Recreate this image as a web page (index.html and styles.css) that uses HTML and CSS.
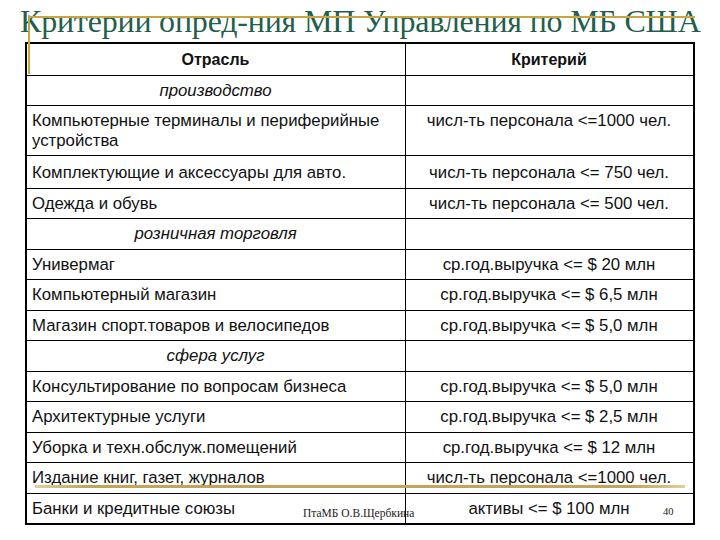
FILE: index.html
```html
<!DOCTYPE html>
<html lang="ru">
<head>
<meta charset="utf-8">
<title>Критерии</title>
<link rel="stylesheet" href="styles.css">
</head>
<body>
<div class="slide">
  <h1 class="title">Критерии опред-ния МП Управления по МБ США</h1>
  <span class="rule-top"></span>
  <span class="rule-left"></span>
  <table class="crit">
    <thead>
      <tr><th class="c-ind">Отрасль</th><th class="c-crit">Критерий</th></tr>
    </thead>
    <tbody>
      <tr class="cat"><td>производство</td><td></td></tr>
      <tr><td>Компьютерные терминалы и периферийные устройства</td><td>числ-ть персонала &lt;=1000 чел.</td></tr>
      <tr class="tall"><td>Комплектующие и аксессуары для авто.</td><td>числ-ть персонала &lt;= 750 чел.</td></tr>
      <tr><td>Одежда и обувь</td><td>числ-ть персонала &lt;= 500 чел.</td></tr>
      <tr class="cat"><td>розничная торговля</td><td></td></tr>
      <tr><td>Универмаг</td><td>ср.год.выручка &lt;= $ 20 млн</td></tr>
      <tr><td>Компьютерный магазин</td><td>ср.год.выручка &lt;= $ 6,5 млн</td></tr>
      <tr><td>Магазин спорт.товаров и велосипедов</td><td>ср.год.выручка &lt;= $ 5,0 млн</td></tr>
      <tr class="cat"><td>сфера услуг</td><td></td></tr>
      <tr><td>Консультирование по вопросам бизнеса</td><td>ср.год.выручка &lt;= $ 5,0 млн</td></tr>
      <tr><td>Архитектурные услуги</td><td>ср.год.выручка &lt;= $ 2,5 млн</td></tr>
      <tr><td>Уборка и техн.обслуж.помещений</td><td>ср.год.выручка &lt;= $ 12 млн</td></tr>
      <tr><td>Издание книг, газет, журналов</td><td>числ-ть персонала &lt;=1000 чел.</td></tr>
      <tr><td>Банки и кредитные союзы</td><td>активы &lt;= $ 100 млн</td></tr>
    </tbody>
  </table>
  <span class="rule-bottom"></span>
  <span class="footer-author">ПтаМБ О.В.Щербкина</span>
  <span class="page-num">40</span>
</div>
</body>
</html>
```
FILE: styles.css
```css
html, body {
  margin: 0;
  padding: 0;
  background: #ffffff;
}

.slide {
  position: relative;
  width: 720px;
  height: 540px;
  overflow: hidden;
  font-family: "Liberation Sans", Arial, sans-serif;
}

.title {
  margin: 0;
  padding-left: 20px;
  height: 42px;
  font-family: "Liberation Serif", "DejaVu Serif", serif;
  font-weight: normal;
  font-size: 32px;
  letter-spacing: -0.2px;
  line-height: 43px;
  color: #1f5f4c;
  white-space: nowrap;
}

.rule-top {
  position: absolute;
  left: 28px;
  top: 16px;
  width: 667px;
  height: 2px;
  background: #c9a440;
}

.rule-left {
  position: absolute;
  left: 28px;
  top: 15px;
  width: 2px;
  height: 59px;
  background: #c9a440;
}

.rule-bottom {
  position: absolute;
  left: 35px;
  top: 485px;
  width: 650px;
  height: 3px;
  background: linear-gradient(to right, #e0cf9c, #c5a458 8%, #c5a458 92%, #e0cf9c);
}

.crit {
  margin-left: 25px;
  width: 670px;
  border-collapse: collapse;
  border: 2px solid #000;
  font-size: 16.8px;
  color: #111;
  table-layout: fixed;
}

.crit th,
.crit td {
  border: 1px solid #000;
  padding: 5px 6px 5px 5px;
  line-height: 19.5px;
  vertical-align: top;
}

.crit th {
  font-weight: bold;
  font-size: 16px;
  text-align: center;
  padding-top: 6px;
}

.c-ind { width: 367px; }

.crit td:nth-child(2) {
  text-align: center;
}

.crit tr.cat td:first-child {
  font-style: italic;
  text-align: center;
}

.crit tr.tall td {
  padding-top: 7px;
}

.footer-author {
  position: absolute;
  left: 303px;
  top: 507px;
  font-family: "Liberation Serif", serif;
  font-size: 11.5px;
  color: #222;
}

.page-num {
  position: absolute;
  left: 663px;
  top: 506px;
  font-family: "Liberation Serif", serif;
  font-size: 10.5px;
  color: #222;
}
```
